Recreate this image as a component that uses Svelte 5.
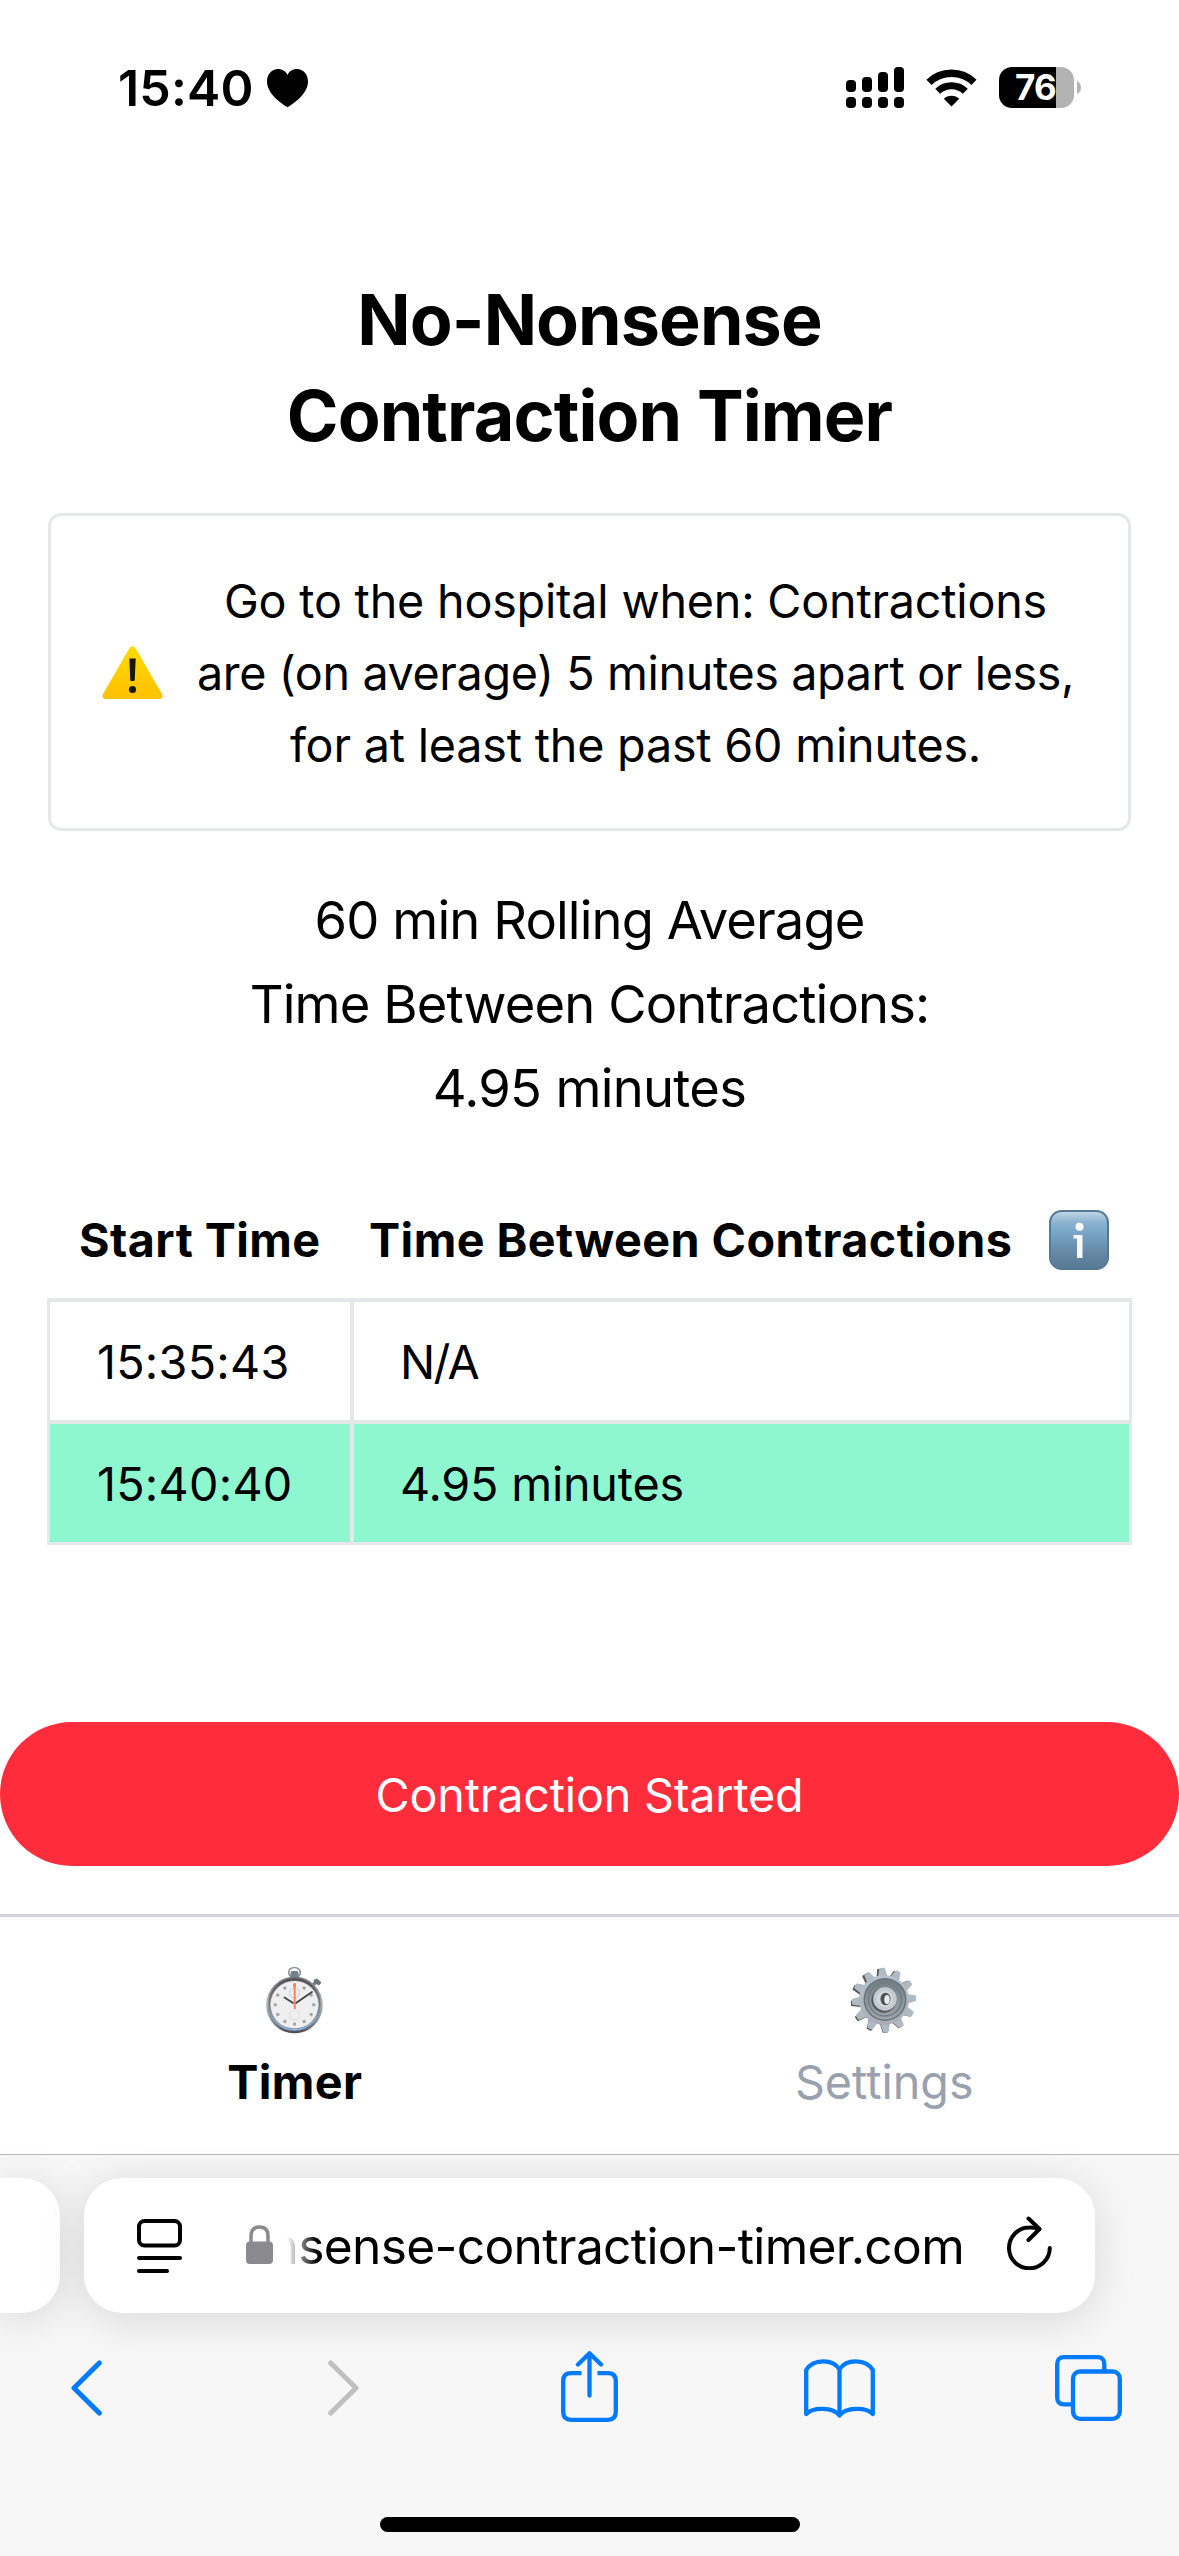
<script>
  const rows = [
    { start: '15:35:43', gap: 'N/A', kind: 'none', active: false },
    { start: '15:40:40', gap: '4.95 minutes', kind: 'value', active: true },
  ];
  const teeth = Array.from({ length: 12 }, (_, i) => i * 30 - 4);
  const ticks = Array.from({ length: 12 }, (_, i) => i * 30);
</script>

<div class="screen">
  <header class="status">
    <div class="clock">
      <span class="time">15:40</span>
      <svg class="heart" width="41" height="38" viewBox="0 0 41 38">
        <path d="M20.5 38C18 37 0 26 0 12.500C0 5 5 0 11 0C15.500 0 19 2.500 20.500 6C22 2.500 25.500 0 30 0C36 0 41 5 41 12.500C41 26 23 37 20.500 38Z" />
      </svg>
    </div>
    <div class="indicators">
      <svg width="58" height="41" viewBox="0 0 58 41">
        <rect x="0" y="13" width="10" height="12" rx="4" />
        <rect x="16" y="10" width="10" height="15" rx="4" />
        <rect x="32" y="5" width="10" height="20" rx="4" />
        <rect x="48" y="0" width="10" height="25" rx="4" />
        <rect x="0" y="30" width="10" height="11" rx="4" />
        <rect x="16" y="30" width="10" height="11" rx="4" />
        <rect x="32" y="30" width="10" height="11" rx="4" />
        <rect x="48" y="30" width="10" height="11" rx="4" />
      </svg>
      <svg class="wifi" width="51" height="38" viewBox="0 0 51 38">
        <path d="M3 13.300A32.500 32.500 0 0 1 48 13.300" fill="none" stroke="#000" stroke-width="7.400" />
        <path d="M11.700 22.300A20 20 0 0 1 39.300 22.300" fill="none" stroke="#000" stroke-width="7" />
        <path d="M25.500 37.500L17.800 29.800A11 11 0 0 1 33.200 29.800Z" />
      </svg>
      <div class="battery">
        <div class="cell"><span>76</span></div>
        <svg width="4" height="13" viewBox="0 0 4 13"><path d="M0 0Q4 2 4 6.500Q4 11 0 13Z" fill="#b3b3b3" /></svg>
      </div>
    </div>
  </header>

  <main>
    <h1>No-Nonsense<br />Contraction Timer</h1>

    <section class="alert">
      <svg class="warn" width="61" height="53" viewBox="0 0 61 53">
        <defs>
          <linearGradient id="warn-fill" x1="0" y1="0" x2="0" y2="1">
            <stop offset="0" stop-color="#ffdc00" />
            <stop offset="1" stop-color="#ffc000" />
          </linearGradient>
        </defs>
        <path d="M27.500 2Q30.500 -1.500 33.500 2L60 48Q61.500 52.500 57.500 53H3.500Q-.5 52.500 1 48Z" fill="url(#warn-fill)" />
        <path d="M27.300 12.500H33.700L32.700 34.500Q30.500 36 28.300 34.500Z" fill="#1a1600" />
        <circle cx="30.500" cy="43.500" r="3.600" fill="#1a1600" />
      </svg>
      <p>Go to the hospital when: Contractions<br /><span class="tight">are (on average) 5 minutes apart or less,</span><br />for at least the past 60 minutes.</p>
    </section>

    <p class="average">60 min Rolling Average<br />Time Between Contractions:<br /><span class="value">4.95 minutes</span></p>

    <section class="log">
      <div class="heads">
        <strong class="h-start">Start Time</strong>
        <strong class="h-gap">Time Between Contractions</strong>
        <svg width="60" height="60" viewBox="0 0 60 60">
          <defs>
            <linearGradient id="info-fill" x1="0" y1="0" x2="0" y2="1">
              <stop offset="0" stop-color="#c3d9e6" />
              <stop offset=".2" stop-color="#8bb3d0" />
              <stop offset=".4" stop-color="#76a3c7" />
              <stop offset=".72" stop-color="#6588a5" />
              <stop offset="1" stop-color="#587994" />
            </linearGradient>
          </defs>
          <rect x="1" y="1" width="58" height="58" rx="11.500" fill="url(#info-fill)" stroke="#557a98" stroke-width="2" />
          <circle cx="30.500" cy="16.800" r="4" fill="#fff" />
          <path d="M24.500 25H33.500V48H28V28.500H24.500Z" fill="#f6f8fa" />
        </svg>
      </div>
      <div class="table">
        {#each rows as row}
          <div class="td" class:active={row.active}>{row.start}</div>
          <div class="td {row.kind}" class:active={row.active}>{row.gap}</div>
        {/each}
      </div>
    </section>

    <button class="start">Contraction Started</button>
  </main>

  <nav class="tabs">
    <div class="tab current">
      <svg width="58" height="68" viewBox="0 0 58 68">
        <defs>
          <linearGradient id="watch-rim" x1="0" y1="0" x2="0" y2="1">
            <stop offset="0" stop-color="#66737f" />
            <stop offset=".45" stop-color="#b5b9b8" />
            <stop offset=".8" stop-color="#85888d" />
            <stop offset="1" stop-color="#4d4448" />
          </linearGradient>
          <linearGradient id="watch-ring" x1="0" y1="0" x2="0" y2="1">
            <stop offset="0" stop-color="#59494d" />
            <stop offset=".5" stop-color="#7b8082" />
            <stop offset="1" stop-color="#8bb8e8" />
          </linearGradient>
        </defs>
        <ellipse cx="28.500" cy="6.500" rx="5.800" ry="5" fill="none" stroke="#8a949c" stroke-width="1.700" />
        <rect x="24.500" y="5" width="8" height="8" rx="2" fill="#74808a" />
        <path d="M46 20L51 15" stroke="#7d878d" stroke-width="3.500" />
        <path d="M47.500 14L51 12.500L55.500 16.500L53 19.500L48.500 17Z" fill="#69757c" />
        <circle cx="28.500" cy="39" r="28.300" fill="url(#watch-rim)" />
        <circle cx="28.500" cy="38.500" r="25.300" fill="none" stroke="url(#watch-ring)" stroke-width="2" />
        <circle cx="28.500" cy="38.800" r="23.800" fill="#efeff0" />
        {#each ticks as angle}
          <path d="M28.500 18V21" stroke="#a2a2a4" stroke-width="2.800" transform={`rotate(${angle} 28.5 38.800)`} />
        {/each}
        <circle cx="28.500" cy="27" r="5" fill="none" stroke="#cfcfd1" stroke-width="1" />
        <circle cx="28.500" cy="49" r="5" fill="none" stroke="#dfdfe0" stroke-width="1" />
        <path d="M18.500 31.500L27 37M30 37L46 26" stroke="#3a454b" stroke-width="1.800" stroke-linecap="round" fill="none" />
        <path d="M28.700 17V43" stroke="#fb7d66" stroke-width="2" />
      </svg>
      <span>Timer</span>
    </div>
    <div class="tab">
      <svg width="66" height="68" viewBox="0 0 66 68">
        <defs>
          <linearGradient id="gear-fill" x1="0" y1="0" x2="0" y2="1">
            <stop offset="0" stop-color="#b5c2cb" />
            <stop offset="1" stop-color="#acacb6" />
          </linearGradient>
          <linearGradient id="gear-well" x1="0" y1="0" x2="0" y2="1">
            <stop offset="0" stop-color="#727e86" />
            <stop offset="1" stop-color="#9ca6ac" />
          </linearGradient>
        </defs>
        {#each teeth as angle}
          <path d="M28 14L30 2H35L38 14Z" fill="#56575a" transform={`translate(-1.500 .8) rotate(${angle} 33 34)`} />
        {/each}
        {#each teeth as angle}
          <path d="M28 14L30.300 3Q30.600 1.800 31.600 1.800H34.900Q36 1.800 36.300 3L39 14Z" fill="#afbbc4" transform={`rotate(${angle} 33 34)`} />
        {/each}
        <circle cx="33" cy="34" r="25" fill="url(#gear-fill)" />
        <circle cx="34" cy="33.500" r="21.500" fill="#68727a" />
        <circle cx="34" cy="33.500" r="20" fill="url(#gear-well)" />
        <circle cx="34" cy="33.500" r="16.500" fill="none" stroke="#717c84" stroke-width="1.500" />
        <circle cx="33" cy="34.200" r="12.500" fill="#5b565b" />
        <circle cx="34" cy="33" r="11.800" fill="#c3cbd2" />
        <circle cx="34" cy="33" r="8" fill="#d2d7dd" />
        <ellipse cx="34.500" cy="33" rx="5" ry="6.200" fill="#4b5155" />
        <ellipse cx="36" cy="33.500" rx="2.700" ry="4.500" fill="#e8eaec" />
      </svg>
      <span>Settings</span>
    </div>
  </nav>

  <footer class="browser">
    <div class="pills">
      <div class="prev"></div>
      <div class="address">
        <svg class="page" width="45" height="54" viewBox="0 0 45 54" fill="none" stroke="#000" stroke-width="4" stroke-linecap="round">
          <rect x="2" y="2" width="41" height="24.500" rx="5.500" />
          <path d="M2 39H43M2 52H30" />
        </svg>
        <svg class="lock" width="27" height="39" viewBox="0 0 27 39">
          <path d="M5 18V11Q5 2 13.500 2T22 11V18" fill="none" stroke="#8a8a8e" stroke-width="3.500" />
          <rect y="16.500" width="27" height="22.500" rx="4" fill="#8a8a8e" />
        </svg>
        <div class="url">nsense-contraction-timer.com</div>
        <svg class="reload" width="45" height="54" viewBox="0 0 45 54" fill="none" stroke="#000" stroke-width="4" stroke-linecap="round" stroke-linejoin="round">
          <path d="M42.800 32A20.400 20.400 0 1 1 22.400 11.500Q27 11.300 32 13" />
          <path d="M21.500 2.500L32.500 13L21.500 24" />
        </svg>
      </div>
    </div>
    <div class="toolbar">
      <svg width="31" height="56" viewBox="0 0 31 56" fill="none" stroke="#007aff" stroke-width="5" stroke-linecap="round" stroke-linejoin="round"><path d="M28.300 3L3 28L28.300 53" /></svg>
      <svg width="31" height="56" viewBox="0 0 31 56" fill="none" stroke="#bfbfbf" stroke-width="5" stroke-linecap="round" stroke-linejoin="round"><path d="M2.700 3L28 28L2.700 53" /></svg>
      <svg class="share" width="57" height="71" viewBox="0 0 57 71" fill="none" stroke="#007aff" stroke-width="4.300" stroke-linecap="round" stroke-linejoin="round">
        <path d="M20.500 22.200H10Q2.200 22.200 2.200 30V61Q2.200 68.800 10 68.800H47Q54.800 68.800 54.800 61V30Q54.800 22.200 47 22.200H36.500" stroke-linecap="butt" />
        <path d="M28.500 44.500V3M17 13.500L28.500 2.300L40 13.500" />
      </svg>
      <svg class="book" width="71" height="59" viewBox="0 0 71 59" fill="none" stroke="#007aff" stroke-width="4.300" stroke-linecap="round" stroke-linejoin="round">
        <path d="M35.500 10.500C29 -.5 9 -.5 2.200 11V55C9 48 29 48 35.500 56.500C42 48 62 48 68.800 55V11C62 -.5 42 -.5 35.500 10.500V56" />
      </svg>
      <svg width="67" height="66" viewBox="0 0 67 66" fill="none" stroke="#007aff" stroke-width="4.300">
        <path d="M49.300 15V9Q49.300 2.200 42.500 2.200H9Q2.200 2.200 2.200 9V42.500Q2.200 49.300 9 49.300H16" />
        <rect x="18" y="16.500" width="46.800" height="47.300" rx="7" />
      </svg>
    </div>
    <div class="home"></div>
  </footer>
</div>

<style>
  :global(body) {
    margin: 0;
    background: #fff;
  }
  .screen {
    width: 1179px;
    height: 2556px;
    overflow: hidden;
    display: flex;
    flex-direction: column;
    background: #fff;
    color: #000;
    font-family: Inter, 'Liberation Sans', sans-serif;
    font-size: 46.700px;
  }
  svg {
    display: block;
    flex: none;
  }
  .status {
    height: 175px;
    flex: none;
    box-sizing: border-box;
    padding: 0 98px 0 118px;
    display: flex;
    justify-content: space-between;
    align-items: center;
  }
  .clock {
    display: flex;
    align-items: center;
    gap: 13px;
  }
  .time {
    font-size: 50px;
    font-weight: 600;
    line-height: 60px;
    letter-spacing: 0.150px;
  }
  .indicators {
    display: flex;
    align-items: center;
    gap: 22px;
  }
  .battery {
    display: flex;
    align-items: center;
    gap: 3px;
  }
  .cell {
    width: 75px;
    height: 41px;
    box-sizing: border-box;
    padding-right: 2px;
    border-radius: 13px;
    background: linear-gradient(90deg, #000 57px, #b3b3b3 57px);
    color: #fff;
    font-size: 35px;
    font-weight: 700;
    line-height: 41px;
    text-align: center;
    letter-spacing: -0.800px;
  }
  main {
    height: 1739px;
    flex: none;
  }
  h1 {
    margin: 0;
    padding-top: 97px;
    font-size: 70px;
    font-weight: 700;
    line-height: 96px;
    letter-spacing: -0.900px;
    text-align: center;
  }
  p {
    margin: 0;
  }
  .alert {
    margin: 49px 48px 0;
    height: 318px;
    box-sizing: border-box;
    padding: 2px 51px 0 51px;
    border: 3px solid #e5e7eb;
    border-radius: 13px;
    display: flex;
    align-items: center;
    justify-content: space-between;
  }
  .warn {
    margin-top: -2px;
  }
  .alert p {
    flex: 1;
    margin-right: -1px;
    margin-left: 30px;
    line-height: 72px;
    letter-spacing: -0.210px;
    text-align: center;
    white-space: nowrap;
  }
  .tight {
    letter-spacing: -0.380px;
  }
  .average {
    margin-top: 47px;
    font-size: 52.500px;
    line-height: 84px;
    letter-spacing: -0.880px;
    text-align: center;
  }
  .value {
    letter-spacing: -0.700px;
  }
  .log {
    margin: 74px 47px 0;
  }
  .heads {
    height: 94px;
    display: flex;
    align-items: flex-start;
    line-height: 72px;
    white-space: nowrap;
  }
  .heads strong {
    font-weight: 700;
    letter-spacing: 0.430px;
  }
  .h-start {
    width: 290px;
    padding-left: 32px;
  }
  .h-gap {
    width: 680px;
  }
  .heads svg {
    margin-top: 6px;
  }
  .table {
    display: grid;
    grid-template-columns: 300px 1fr;
    grid-auto-rows: 118px;
    gap: 4px;
    padding: 4px 3px 3px;
    background: #e5e7eb;
  }
  .td {
    height: 118px;
    padding-left: 47px;
    background: #fff;
    line-height: 120px;
    letter-spacing: 0.250px;
  }
  .td.none {
    padding-left: 46px;
    letter-spacing: -1.700px;
  }
  .td.value {
    padding-left: 46px;
    letter-spacing: -0.200px;
  }
  .td.active {
    background: #8ef7d0;
  }
  .start {
    display: block;
    width: 1179px;
    height: 144px;
    margin-top: 177px;
    padding: 2px 0 0;
    border: 0;
    border-radius: 72px;
    background: #ff2d3b;
    color: #fff;
    font: inherit;
    letter-spacing: -0.170px;
    text-align: center;
  }
  .tabs {
    height: 240px;
    box-sizing: border-box;
    flex: none;
    display: grid;
    grid-template-columns: 1fr 1fr;
    border-top: 3px solid #d1d5db;
  }
  .tab {
    display: flex;
    flex-direction: column;
    align-items: center;
    padding-top: 49px;
    gap: 12px;
    line-height: 72px;
    color: #99a1af;
  }
  .current {
    color: #000;
    font-weight: 700;
    letter-spacing: 0.400px;
  }
  .browser {
    flex: 1;
    border-top: 1px solid #b9b9b9;
    background: #f7f7f7;
  }
  .pills {
    display: flex;
    gap: 24px;
    padding-top: 23px;
  }
  .prev {
    width: 60px;
    height: 135px;
    border-radius: 0 38px 38px 0;
    background: #fff;
    box-shadow: 0 6px 45px rgba(0, 0, 0, 0.13);
  }
  .address {
    width: 1011px;
    height: 135px;
    box-sizing: border-box;
    padding: 0 43px 0 53px;
    border-radius: 38px;
    background: #fff;
    box-shadow: 0 6px 45px rgba(0, 0, 0, 0.13);
    display: flex;
    align-items: center;
  }
  .lock {
    margin: -2px 0 0 64px;
  }
  .url {
    flex: 1;
    min-width: 0;
    margin-left: -12px;
    margin-right: 43px;
    padding-top: 1px;
    font-size: 49.700px;
    line-height: 135px;
    letter-spacing: -0.680px;
    text-align: right;
    white-space: nowrap;
    mask-image: linear-gradient(90deg, transparent 26px, #000 56px);
  }
  .reload {
    margin-top: -5px;
  }
  .toolbar {
    height: 76px;
    margin-top: 37px;
    display: grid;
    grid-template-columns: 173px 341px 151px 349px 149px;
    justify-items: center;
    align-items: center;
  }
  .share {
    margin-top: -3px;
  }
  .home {
    width: 420px;
    height: 15px;
    margin: 91px auto 0;
    border-radius: 8px;
    background: #000;
  }
</style>
